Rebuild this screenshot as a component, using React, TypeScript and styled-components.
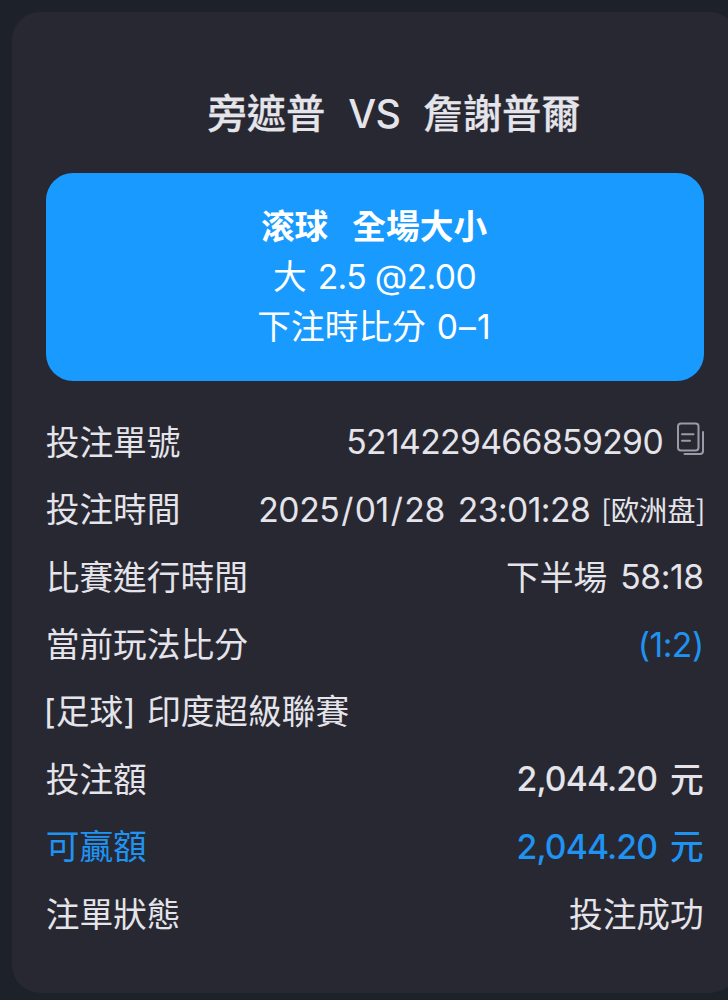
import React from 'react';
import styled, { createGlobalStyle } from 'styled-components';

const Global = createGlobalStyle`
  * { box-sizing: border-box; }
  body {
    margin: 0;
    background: #1d2129;
    overflow: hidden;
    font-family: Inter, "Noto Sans CJK TC", sans-serif;
    color: #e4e4ea;
  }
`;

const Page = styled.main`
  width: 728px;
  height: 1000px;
  padding: 12px 0 7px 12px;
  overflow: hidden;
`;

const Card = styled.article`
  width: 726px;
  height: 981px;
  padding: 74px 34px 0;
  border-radius: 28px;
  background: #282832;
`;

const Title = styled.h1`
  display: flex;
  justify-content: center;
  gap: 23px;
  height: 56px;
  margin: 0 0 0 38px;
  font-size: 39.3px;
  font-weight: 500;
  line-height: 56px;
  white-space: nowrap;
`;

const Team = styled.span`
  -webkit-text-stroke: 0.25px currentColor;
`;

const Versus = styled.span`
  letter-spacing: -0.6px;
`;

const Pick = styled.section`
  display: flex;
  flex-direction: column;
  align-items: center;
  height: 207.5px;
  margin-top: 31px;
  padding-top: 28px;
  border-radius: 27px;
  background: #189aff;
  color: #fff;
`;

const PickLine = styled.div<{ $strong?: boolean }>`
  display: flex;
  gap: ${p => (p.$strong ? 24 : 11)}px;
  height: 50.5px;
  margin-left: ${p => (p.$strong ? -2 : -1)}px;
  font-size: 33.7px;
  font-weight: ${p => (p.$strong ? 700 : 400)};
  line-height: ${p => (p.$strong ? 52 : 50)}px;
  white-space: nowrap;
`;

const Rows = styled.dl`
  margin: 28.5px 0 0;
`;

const Row = styled.div<{ $accent?: boolean }>`
  display: flex;
  align-items: center;
  justify-content: space-between;
  height: 67.45px;
  font-size: 33.7px;
  line-height: 48px;
  white-space: nowrap;
  color: ${p => (p.$accent ? '#1f93f2' : 'inherit')};
`;

const Label = styled.dt<{ $bracketed?: boolean }>`
  display: flex;
  gap: 11.5px;
  margin-left: ${p => (p.$bracketed ? -2.5 : -0.3)}px;
`;

const Value = styled.dd<{ $weight?: number; $accent?: boolean }>`
  display: flex;
  align-items: center;
  gap: 13px;
  margin: 0 0.3px 0 0;
  font-weight: ${p => p.$weight ?? 400};
  color: ${p => (p.$accent ? '#1f93f2' : 'inherit')};
`;

const Latin = styled.span<{ $track?: number }>`
  letter-spacing: ${p => p.$track ?? 0}px;
`;

const RowLatin = styled(Latin)`
  margin-top: -1px;
`;

const Slash = styled.span`
  padding: 0 1.8px;
`;

const Market = styled.span`
  margin: -2px -1.5px 0 -2px;
  font-family: "Noto Sans CJK SC", sans-serif;
  font-size: 28.3px;
`;

const Copy = styled.svg`
  width: 28px;
  height: 34px;
  margin: -8px -0.3px 0 0;
  fill: none;
  stroke: #9a9aa8;
  stroke-width: 2;
  stroke-linecap: round;
  stroke-linejoin: round;
`;

const CopyIcon = () => (
  <Copy viewBox="0 0 28 34" aria-label="複製">
    <rect x="2" y="1.5" width="20.5" height="27" rx="3" />
    <path d="M6 12.3h11.5M6 18.8h8M27 10v19a3 3 0 0 1-3 3H8.5" />
  </Copy>
);

export default function App() {
  return (
    <Page>
      <Global />
      <Card>
        <Title>
          <Team>旁遮普</Team>
          <Versus>VS</Versus>
          <Team>詹謝普爾</Team>
        </Title>
        <Pick>
          <PickLine $strong>
            <span>滚球</span>
            <span>全場大小</span>
          </PickLine>
          <PickLine>
            <span>大</span>
            <Latin $track={-0.65}>2.5 @2.00</Latin>
          </PickLine>
          <PickLine>
            <span>下注時比分</span>
            <Latin $track={1}>0–1</Latin>
          </PickLine>
        </Pick>
        <Rows>
          <Row>
            <Label>投注單號</Label>
            <Value>
              <RowLatin $track={-0.63}>5214229466859290</RowLatin>
              <CopyIcon />
            </Value>
          </Row>
          <Row>
            <Label>投注時間</Label>
            <Value>
              <RowLatin $track={-0.4}>
                2025<Slash>/</Slash>01<Slash>/</Slash>28
              </RowLatin>
              <RowLatin $track={-0.6}>23:01:28</RowLatin>
              <Market>[欧洲盘]</Market>
            </Value>
          </Row>
          <Row>
            <Label>比賽進行時間</Label>
            <Value>
              <span>下半場</span>
              <RowLatin $track={-0.4}>58:18</RowLatin>
            </Value>
          </Row>
          <Row>
            <Label>當前玩法比分</Label>
            <Value $accent>
              <RowLatin $track={-0.5}>(1:2)</RowLatin>
            </Value>
          </Row>
          <Row>
            <Label $bracketed>
              <span>[足球]</span>
              <span>印度超級聯賽</span>
            </Label>
          </Row>
          <Row>
            <Label>投注額</Label>
            <Value $weight={500}>
              <RowLatin $track={-0.9}>2,044.20</RowLatin>
              <span>元</span>
            </Value>
          </Row>
          <Row $accent>
            <Label>可贏額</Label>
            <Value $weight={500}>
              <RowLatin $track={-0.9}>2,044.20</RowLatin>
              <span>元</span>
            </Value>
          </Row>
          <Row>
            <Label>注單狀態</Label>
            <Value>投注成功</Value>
          </Row>
        </Rows>
      </Card>
    </Page>
  );
}
